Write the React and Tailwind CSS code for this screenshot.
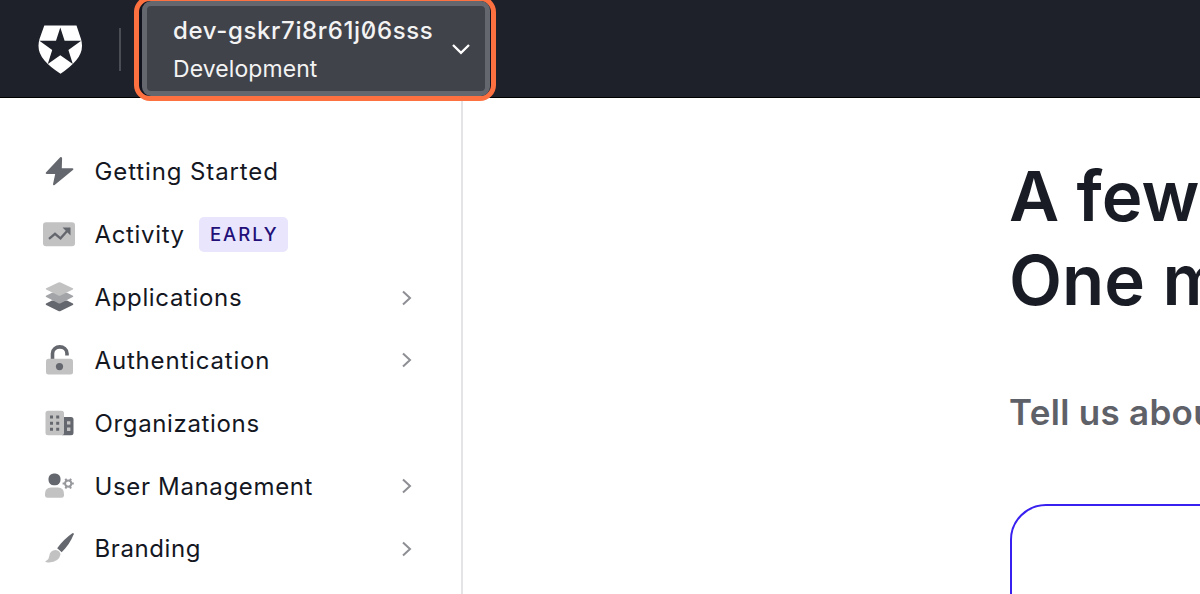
const Bolt = () => (
  <svg className="size-8" viewBox="0 0 32 32">
    <path d="M17.200 2.200 2.900 17.600q-.8 1.400.8 1.400H12.200l-2.200 10.200q.2 1.600 1.600.7L30.200 14.700q.8-1.500-.8-1.500H18.800l.3-10q-.4-1.700-1.900-1Z" fill="#65676e" />
  </svg>
);
const Activity = () => (
  <svg className="size-8" viewBox="0 0 32 32">
    <rect x="0" y="4.200" width="32" height="24" rx="3" fill="#c2c2c3" />
    <path d="M6 20.800 12 15.800 17.500 20.300 25 12" fill="none" stroke="#65676e" strokeWidth="2.300" />
    <path d="M19.500 9.500h8v8Z" fill="#65676e" />
  </svg>
);
const Layers = () => (
  <svg className="size-8" viewBox="0 0 32 32">
    <path d="M3 22.500 9 19.500h15l6 3q.8.700-.2 1.400L17.600 30q-1.100.6-2.200 0L3.200 23.900q-1-.700-.2-1.400Z" fill="#65676e" />
    <path d="M3 14.700 9 11.700h15l6 3q.8.700-.2 1.400L17.600 22.200q-1.100.6-2.200 0L3.200 16.100q-1-.700-.2-1.400Z" fill="#a3a4a7" />
    <path d="M3.200 7.200 15.400 1.400q1.100-.5 2.200 0l12.200 5.800q1 .600 0 1.300L17.600 14.400q-1.100.5-2.200 0L3.200 8.500q-1-.700 0-1.300Z" fill="#c2c2c3" />
  </svg>
);
const Lock = () => (
  <svg className="size-8" viewBox="0 0 32 32">
    <path d="M9.500 15.500V9.500c0-8.800 14.500-8.800 14.500 0v2" fill="none" stroke="#65676e" strokeWidth="3.600" />
    <rect x="3" y="14.700" width="27" height="15.800" rx="2.500" fill="#c2c2c3" />
    <circle cx="16.500" cy="22.600" r="3.600" fill="#65676e" />
  </svg>
);
const Buildings = () => (
  <svg className="size-8" viewBox="0 0 32 32">
    <path d="M19 10h9q2.500 0 2.500 2.500v13.200q0 2.500-2.500 2.500h-9Z" fill="#65676e" />
    <path d="M24 14.200h3.400v3.400H24zM24 20.500h3.400v3.400H24z" fill="#c2c2c3" />
    <rect x="2.500" y="3.800" width="18.500" height="24.400" rx="2.500" fill="#c2c2c3" />
    <path d="M7 8.500h3v3H7zM13.200 8.500h3v3h-3zM7 14.800h3v3H7zM13.200 14.800h3v3h-3zM7 20.800h3v3H7zM13.200 20.800h3v3h-3z" fill="#65676e" />
  </svg>
);
const UserGear = () => (
  <svg className="size-8" viewBox="0 0 32 32">
    <rect x="5.500" y="3.500" width="12" height="11.800" rx="5.200" fill="#65676e" />
    <path d="M2 24q0-6.500 6-6.500h7q6 0 6 6.500v1.500q0 2.300-2.500 2.300h-14Q2 27.800 2 25.500Z" fill="#c2c2c3" />
    <circle cx="25.200" cy="13.600" r="3.100" fill="none" stroke="#97989c" strokeWidth="1.900" />
    <path d="M22.400 8.800 23.800 11.300M28 8.800 26.600 11.300M22.400 18.400 23.800 15.900M28 18.400 26.600 15.900M19.600 13.600H22.200M28.200 13.600h2.600" stroke="#97989c" strokeWidth="2" />
  </svg>
);
const Brush = () => (
  <svg className="size-8" viewBox="0 0 32 32">
    <path d="M14.200 16.200Q21 7 29.300 1.300q1.600-.7 1.400 1Q27 12 18.700 20.300Z" fill="#65676e" />
    <path d="M12.700 18q4.500.5 4.800 4.600Q16 30 6 30.500q-2.500.3-3.600-.7-.3-1 1.300-1.400Q6 27 6.300 24q.5-5.500 6.400-6Z" fill="#c2c2c3" />
  </svg>
);

const items = [
  { label: "Getting Started", Icon: Bolt, tracking: "tracking-[0.880px]" },
  { label: "Activity", Icon: Activity, tracking: "tracking-[0.650px]", badge: "EARLY" },
  { label: "Applications", Icon: Layers, tracking: "tracking-[0.650px]", more: true },
  { label: "Authentication", Icon: Lock, tracking: "tracking-[0.820px]", more: true },
  { label: "Organizations", Icon: Buildings, tracking: "tracking-[0.650px]" },
  { label: "User Management", Icon: UserGear, tracking: "tracking-[0.650px]", more: true },
  { label: "Branding", Icon: Brush, tracking: "tracking-[0.600px]", more: true },
];

function Header() {
  return (
    <header className="relative z-10 flex h-[98px] shrink-0 items-start border-b border-black bg-[#1e212a]">
      <svg className="ml-9 mt-6 h-[52px] w-12 shrink-0" viewBox="0 0 48 52">
        <path d="M8.300 1.500h32.200L45 15q3.500 12-5 21.500-6 7-15.500 13.200Q14 43 8.500 36.500 0 27 3.500 15Z" fill="#fff" />
        <path d="M24.300 3.500 28.600 16.800H45.200L32.400 26 36.800 40 24.300 31.300 11.800 40 16.200 26 3.400 16.800H20Z" fill="#1e212a" />
      </svg>
      <div className="ml-[35px] mt-7 h-[43px] w-0.5 shrink-0 bg-[#4b4d55]" />
      <div className="-mt-1 ml-[13px] h-[104.500px] w-[362px] shrink-0 rounded-[16px] border-[5.500px] border-[#fd7140] bg-[#11141f] pb-1 pl-[3px] pr-px">
        <button className="flex h-[95px] w-full items-center justify-between rounded-[9px] border-[5.500px] border-[#65676e] bg-[#41434a] pl-[26px] pr-[14px] text-left text-[#f3f3f4]">
          <span className="flex flex-col pt-[3px]">
            <span className="h-[39px] whitespace-nowrap text-[24px] font-medium leading-[39px] tracking-[0.640px] [font-feature-settings:'zero']">dev-gskr7i8r61j06sss</span>
            <span className="h-[39px] text-[23px] leading-[39px] tracking-[0.08px]">Development</span>
          </span>
          <svg className="h-3 w-5" viewBox="0 0 20 12">
            <path d="M2 2 10 9.800 18 2" fill="none" stroke="#fff" strokeWidth="2.300" />
          </svg>
        </button>
      </div>
    </header>
  );
}

function Sidebar() {
  return (
    <nav className="w-[463px] shrink-0 border-r-2 border-[#e4e4e6] pl-[43px] pr-12 pt-[42px]">
      {items.map(({ label, Icon, badge, more, tracking }) => (
        <a key={label} className="flex h-[62.850px] items-center text-[24px] text-[#14171f]">
          <Icon />
          <span className={`ml-[19.500px] pt-0.5 ${tracking}`}>{label}</span>
          {badge && (
            <span className="ml-3.5 mt-px flex h-[35px] w-[89px] items-center justify-center rounded-[5px] bg-[#e8e5fd] pl-0.5 pt-px text-[18.500px] font-medium tracking-[2px] text-[#220f77]">{badge}</span>
          )}
          {more && (
            <svg className="ml-auto mt-px h-4 w-3" viewBox="0 0 12 16">
              <path d="M2 1.500 9 8 2 14.500" fill="none" stroke="#8e8f94" strokeWidth="2" />
            </svg>
          )}
        </a>
      ))}
    </nav>
  );
}

export default function App() {
  return (
    <div className="flex h-[594px] w-[1200px] flex-col overflow-hidden bg-white font-['Inter',sans-serif]">
      <Header />
      <div className="flex min-h-0 flex-1">
        <Sidebar />
        <main className="min-w-0 flex-1 overflow-hidden pl-[547px] pt-[56px]">
          <h1 className="-ml-px w-[300px] whitespace-nowrap text-[69px] font-semibold leading-[84px] text-[#191c25]">
            A few
            <br />
            One m
          </h1>
          <p className="-ml-px mt-[65px] h-[50px] w-[300px] whitespace-nowrap text-[35px] font-semibold leading-[50px] tracking-[0.3px] text-[#5f6168]">Tell us abou</p>
          <div className="mt-[67px] h-[300px] w-[700px] rounded-[36px] border-2 border-[#3820f0]" />
        </main>
      </div>
    </div>
  );
}
